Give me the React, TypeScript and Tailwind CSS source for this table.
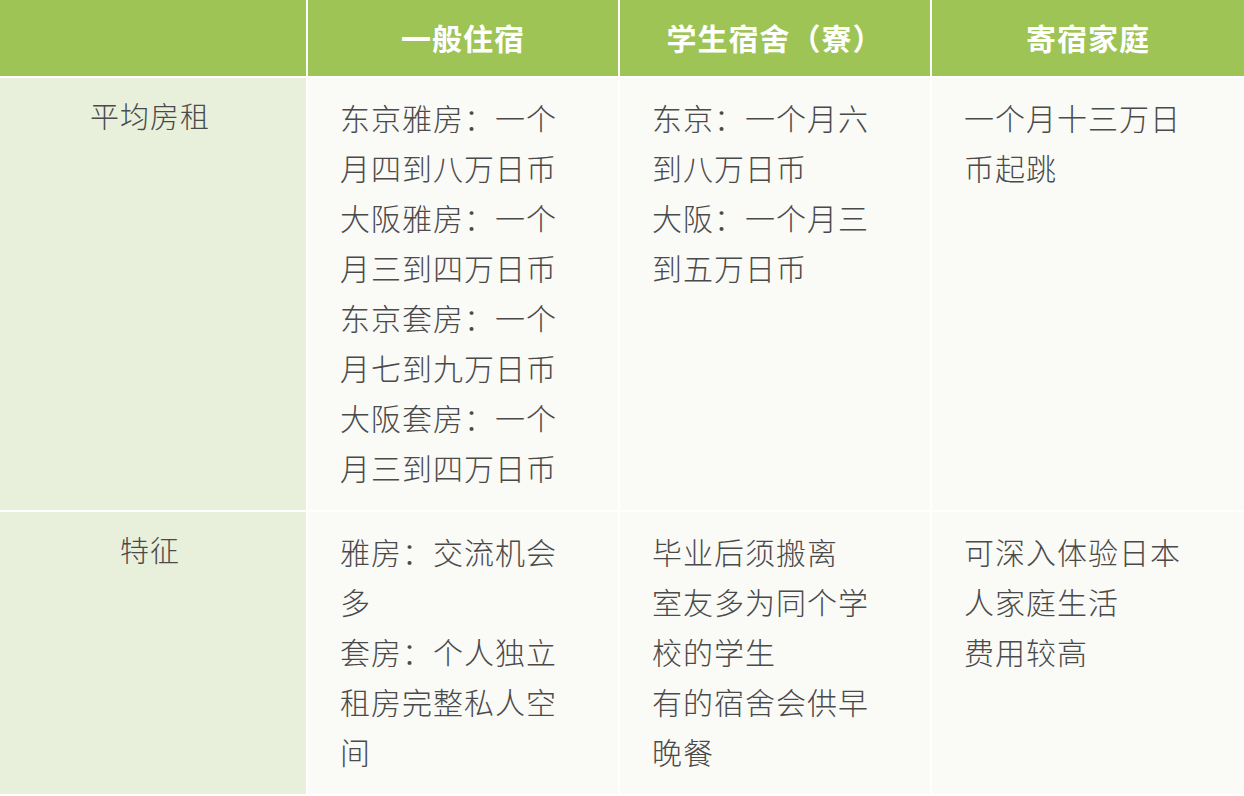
import React from 'react';

type Row = {
  label: string;
  cells: string[][];
};

const headers = ['一般住宿', '学生宿舍（寮）', '寄宿家庭'];

const rows: Row[] = [
  {
    label: '平均房租',
    cells: [
      ['东京雅房：一个月四到八万日币', '大阪雅房：一个月三到四万日币', '东京套房：一个月七到九万日币', '大阪套房：一个月三到四万日币'],
      ['东京：一个月六到八万日币', '大阪：一个月三到五万日币'],
      ['一个月十三万日币起跳'],
    ],
  },
  {
    label: '特征',
    cells: [
      ['雅房：交流机会多', '套房：个人独立租房完整私人空间'],
      ['毕业后须搬离', '室友多为同个学校的学生', '有的宿舍会供早晚餐'],
      ['可深入体验日本人家庭生活', '费用较高'],
    ],
  },
];

const App: React.FC = () => {
  return (
    <div
      className="w-[1244px] h-[796px] overflow-hidden bg-white"
      style={{ fontFamily: '"Noto Sans CJK SC", "Noto Sans", sans-serif' }}
    >
      <div className="grid grid-cols-[306px_310px_310px_312px] gap-[2px] bg-white">
        {/* Header */}
        <div className="h-[76px] bg-[#9dc455]"></div>
        {headers.map((h) => (
          <div
            key={h}
            className="h-[76px] bg-[#9dc455] flex items-center justify-center text-white font-bold text-[30px] tracking-[1px] pb-[2px]"
          >
            {h}
          </div>
        ))}

        {/* Body */}
        {rows.map((row) => (
          <React.Fragment key={row.label}>
            <div className="bg-[#e8f0dc] pt-[12px] pb-4 text-center text-[29px] leading-[50px] tracking-[1px] font-light text-[#4a4a4a] pr-[6px]">
              {row.label}
            </div>
            {row.cells.map((lines, i) => (
              <div key={i} className="bg-[#fafaf7] pl-[32px] pt-[14px] pb-[18px]">
                {lines.map((line, j) => (
                  <p key={j} className="w-[232px] text-[30px] leading-[50px] tracking-[1px] font-light text-[#4a4a4a]">
                    {line}
                  </p>
                ))}
              </div>
            ))}
          </React.Fragment>
        ))}
      </div>
    </div>
  );
};

export default App;
